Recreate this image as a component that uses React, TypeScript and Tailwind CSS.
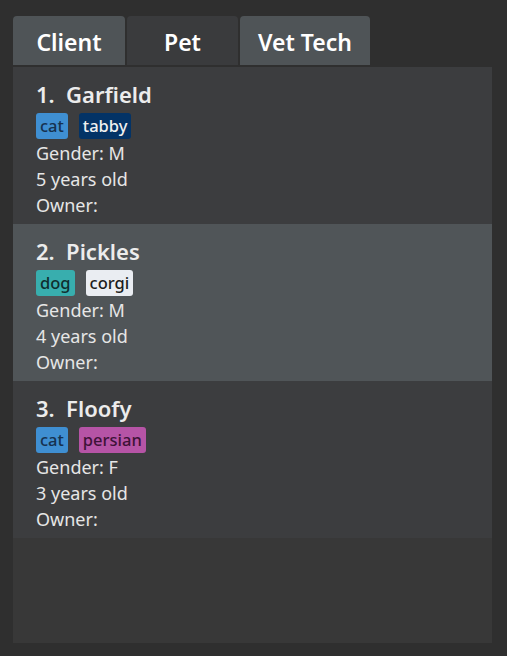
const pets = [
  {
    n: 1,
    name: "Garfield",
    tags: [
      { t: "cat", c: "bg-[#3f8fd2] text-[#16324f]" },
      { t: "tabby", c: "bg-[#033366] text-[#f0f0f0]" },
    ],
    gender: "M",
    age: 5,
  },
  {
    n: 2,
    name: "Pickles",
    tags: [
      { t: "dog", c: "bg-[#38aeae] text-[#0f2f30]" },
      { t: "corgi", c: "bg-[#eaedf2] text-[#1c1c1c]" },
    ],
    gender: "M",
    age: 4,
  },
  {
    n: 3,
    name: "Floofy",
    tags: [
      { t: "cat", c: "bg-[#3f8fd2] text-[#16324f]" },
      { t: "persian", c: "bg-[#b654a6] text-[#3e1238]" },
    ],
    gender: "F",
    age: 3,
  },
];

const tabs = [
  { label: "Client", w: "w-[112px]", bg: "bg-[#4f5457]" },
  { label: "Pet", w: "w-[111px]", bg: "bg-[#3a3b3d]" },
  { label: "Vet Tech", w: "w-[130px]", bg: "bg-[#4f5457]" },
];

export default function App() {
  return (
    <div
      className="h-[656px] w-[507px] bg-[#2f2f2f] pl-[13px] pr-[15px] pt-[16px] pb-[13px] flex flex-col"
      style={{ fontFamily: '"Noto Sans", "Open Sans", sans-serif' }}
    >
      <div className="flex gap-[2px] h-[49px]">
        {tabs.map((tab) => (
          <div
            key={tab.label}
            className={`${tab.w} ${tab.bg} rounded-t-[4px] flex items-center justify-center pt-[3px] text-[23px] font-semibold text-white`}
          >
            {tab.label}
          </div>
        ))}
      </div>
      <div className="mt-[2px] flex-1 bg-[#383838] flex flex-col">
        {pets.map((p) => (
          <div
            key={p.n}
            className={`h-[157px] pl-[23px] pt-[12px] ${p.n === 2 ? "bg-[#505558]" : "bg-[#3c3d3f]"}`}
          >
            <div className="text-[22px] font-semibold text-[#ececec] leading-[30px]">
              {p.n}.&nbsp;&nbsp;{p.name}
            </div>
            <div className="flex gap-[11px] mt-[4px]">
              {p.tags.map((tg) => (
                <span
                  key={tg.t}
                  className={`${tg.c} rounded-[3px] h-[26px] px-[4px] flex items-center text-[16.5px] font-medium`}
                >
                  {tg.t}
                </span>
              ))}
            </div>
            <div className="text-[18px] text-[#e6e6e6] leading-[26px] mt-[1px]">
              <div>Gender: {p.gender}</div>
              <div>{p.age} years old</div>
              <div>Owner:</div>
            </div>
          </div>
        ))}
      </div>
    </div>
  );
}
